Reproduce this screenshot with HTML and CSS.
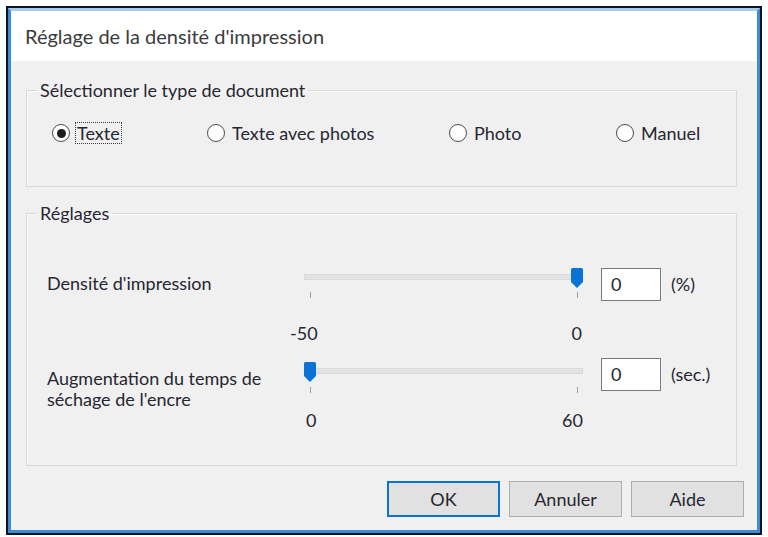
FILE: index.html
```html
<!DOCTYPE html>
<html lang="fr">
<head>
<meta charset="utf-8">
<title>Réglage de la densité d'impression</title>
<link rel="stylesheet" href="styles.css">
</head>
<body>
<div class="window">
  <div class="frame">
    <div class="titlebar">Réglage de la densité d'impression</div>
    <div class="client">
      <fieldset class="group group-type">
        <legend>Sélectionner le type de document</legend>
        <div class="radios">
          <label class="radio checked"><span class="circle"></span><span class="rtext focus">Texte</span></label>
          <label class="radio"><span class="circle"></span><span class="rtext">Texte avec photos</span></label>
          <label class="radio"><span class="circle"></span><span class="rtext">Photo</span></label>
          <label class="radio"><span class="circle"></span><span class="rtext">Manuel</span></label>
        </div>
      </fieldset>

      <fieldset class="group group-set">
        <legend>Réglages</legend>
        <div class="srow row1">
          <div class="slabel">Densité d'impression</div>
          <div class="slider">
            <div class="track-zone">
              <div class="track"></div>
              <svg class="thumb thumb-max" width="12" height="20" viewBox="0 0 12 20"><path d="M1.5 0 H10.5 Q12 0 12 1.5 V14 L6 20 L0 14 V1.5 Q0 0 1.5 0 Z" fill="#0a74d6"/></svg>
            </div>
            <div class="ticks"><span class="tick"></span><span class="tick"></span></div>
            <div class="scale"><span class="sl sl-left">-50</span><span class="sl sl-right">0</span></div>
          </div>
          <div class="num">0</div>
          <div class="unit">(%)</div>
        </div>
        <div class="srow row2">
          <div class="slabel">Augmentation du temps de<br>séchage de l'encre</div>
          <div class="slider">
            <div class="track-zone">
              <div class="track"></div>
              <svg class="thumb thumb-min" width="12" height="20" viewBox="0 0 12 20"><path d="M1.5 0 H10.5 Q12 0 12 1.5 V14 L6 20 L0 14 V1.5 Q0 0 1.5 0 Z" fill="#0a74d6"/></svg>
            </div>
            <div class="ticks"><span class="tick"></span><span class="tick"></span></div>
            <div class="scale"><span class="sl">0</span><span class="sl">60</span></div>
          </div>
          <div class="num">0</div>
          <div class="unit">(sec.)</div>
        </div>
      </fieldset>

      <div class="buttons">
        <button class="btn default">OK</button>
        <button class="btn">Annuler</button>
        <button class="btn">Aide</button>
      </div>
    </div>
  </div>
</div>
</body>
</html>
```

FILE: styles.css
```css
* { box-sizing: border-box; }
html, body { margin: 0; padding: 0; background: #ffffff; }
body {
  font-family: Lato, "Open Sans", "Liberation Sans", sans-serif;
  font-size: 18px;
  color: #262630;
}
.window {
  margin: 6px 0 0 6px;
  width: 756px;
  height: 529px;
  border: 2px solid #0c1620;
}
.frame {
  height: 100%;
  border: 3px solid #3d8ad6;
  border-top-color: #a6ccef;
  display: flex;
  flex-direction: column;
}
.titlebar {
  height: 50px;
  background: #ffffff;
  padding-left: 14px;
  display: flex;
  align-items: center;
  font-size: 20px;
  color: #3c3c3c;
}
.client {
  flex: 1;
  background: #f0f0f0;
  padding: 19px 13px 0 15px;
  display: flex;
  flex-direction: column;
}
.group {
  margin: 0;
  width: 711px;
  border: 1px solid #d9d9d9;
  box-shadow: inset 1px 1px 0 #fafafa;
  padding: 0;
}
.group legend {
  margin-left: 10px;
  padding: 0 3px;
  line-height: 20px;
}
.group-type {
  height: 107px;
}
.radios {
  display: grid;
  grid-template-columns: 155px 242px 167px auto;
  margin: 22px 0 0 25px;
  align-items: center;
}
.radio {
  display: flex;
  align-items: center;
  gap: 5px;
}
.circle {
  width: 18px;
  height: 18px;
  border: 1.5px solid #4a4a4a;
  border-radius: 50%;
  background: #ffffff;
  display: flex;
  align-items: center;
  justify-content: center;
}
.radio.checked .circle::after {
  content: "";
  width: 9px;
  height: 9px;
  border-radius: 50%;
  background: #1e1e1e;
}
.rtext { padding: 0 1px; line-height: 20px; border: 1px solid transparent; }
.rtext.focus { border: 1px dotted #3a3a3a; }

.group-set {
  margin-top: 16px;
  height: 263px;
}
.srow {
  display: grid;
  grid-template-columns: 257px 297px 60px auto;
  align-items: start;
  margin-left: 20px;
}
.row1 { margin-top: 45px; }
.row2 { margin-top: 17px; }
.slabel { line-height: 21px; }
.row1 .slabel { margin-top: 5px; }
.row2 .slabel { margin-top: 10px; }
.slider { display: flex; flex-direction: column; width: 279px; }
.row2 .slider { padding-top: 4px; }
.track-zone { position: relative; height: 20px; }
.track {
  position: absolute;
  left: 0; right: 0; top: 6px;
  height: 6px;
  background: #e3e3e3;
  border: 1px solid #dadada;
}
.thumb { position: absolute; top: 0; }
.thumb-max { right: 0; }
.thumb-min { left: 0; }
.ticks {
  display: flex;
  justify-content: space-between;
  padding: 0 5px 0 6px;
  margin-top: 4px;
}
.row2 .ticks { margin-top: 5px; }
.tick { width: 1px; height: 6px; background: #a0a0a0; }
.scale {
  display: flex;
  justify-content: space-between;
  line-height: 16px;
}
.row1 .scale { margin-top: 27px; padding: 0 1px 0 0; }
.row2 .scale { margin-top: 19px; padding: 0 0 0 2px; }
.sl-left { margin-left: -14px; }
.num {
  width: 60px;
  height: 33px;
  background: #ffffff;
  border: 1px solid #7a7a7a;
  padding-left: 9px;
  line-height: 31px;
}
.unit { margin-left: 10px; line-height: 33px; }

.buttons {
  display: flex;
  justify-content: flex-end;
  gap: 9px;
  margin-top: 15px;
}
.btn {
  width: 113px;
  height: 36px;
  background: #e1e1e1;
  border: 1px solid #adadad;
  font-family: inherit;
  font-size: 18px;
  color: #262630;
  padding: 0;
}
.btn.default { border: 2px solid #0a74d6; }
```
